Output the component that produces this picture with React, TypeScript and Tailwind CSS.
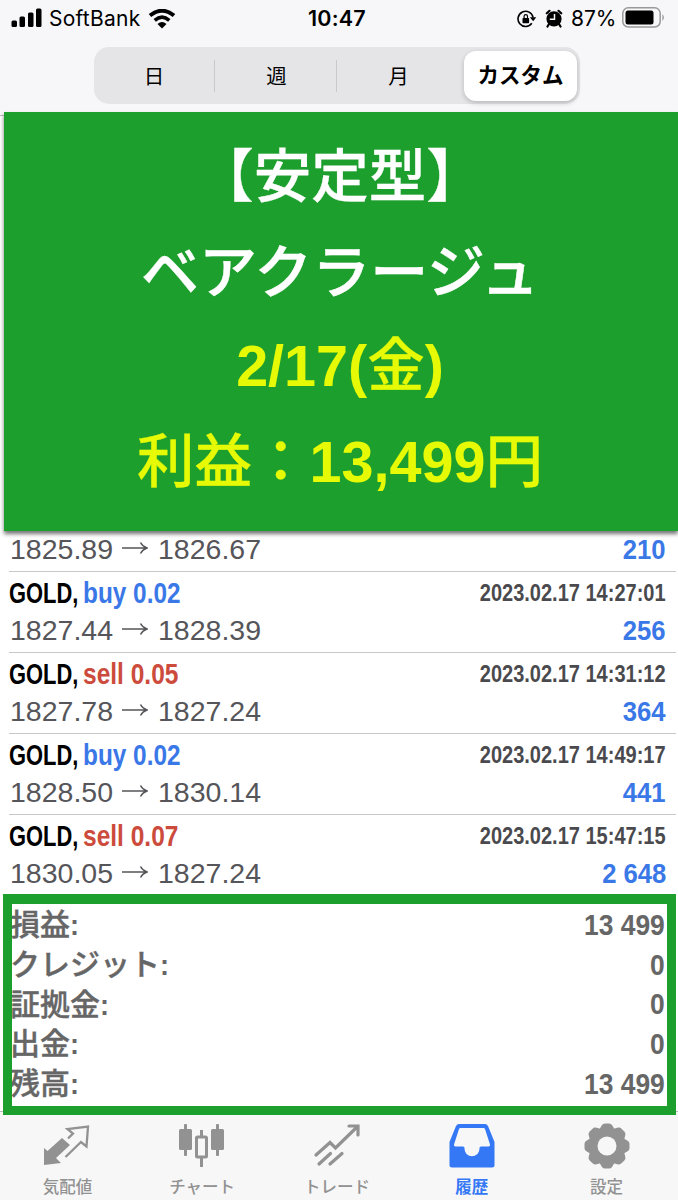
import React from "react";

const trades = [
  { side: "buy", lot: "0.02", time: "2023.02.17 14:27:01", from: "1827.44", to: "1828.39", profit: "256" },
  { side: "sell", lot: "0.05", time: "2023.02.17 14:31:12", from: "1827.78", to: "1827.24", profit: "364" },
  { side: "buy", lot: "0.02", time: "2023.02.17 14:49:17", from: "1828.50", to: "1830.14", profit: "441" },
  { side: "sell", lot: "0.07", time: "2023.02.17 15:47:15", from: "1830.05", to: "1827.24", profit: "2 648" },
];

const summary = [
  { label: "損益", value: "13 499" },
  { label: "クレジット", value: "0" },
  { label: "証拠金", value: "0" },
  { label: "出金", value: "0" },
  { label: "残高", value: "13 499" },
];

function StatusBar() {
  return (
    <div className="flex h-[37px] items-center pl-[11px] pr-[13px] text-black">
      <div className="flex flex-1 items-center">
        <svg className="-mt-[2px]" width="31" height="20" viewBox="0 0 31 20">
          <rect x="0.5" y="12.500" width="5.5" height="6.500" rx="1.5" />
          <rect x="8.5" y="8.500" width="5.500" height="10.500" rx="1.500" />
          <rect x="17" y="4.500" width="5.500" height="14.500" rx="1.500" />
          <rect x="25" y="0.500" width="5.500" height="18.500" rx="1.500" />
        </svg>
        <span className="ml-[7px] w-[92px] whitespace-nowrap font-[Inter] text-[21px] leading-[37px] tracking-[0.250px]">SoftBank</span>
        <svg className="ml-[7px]" width="28" height="20" viewBox="0 0 28 20">
          <path d="M2 6.500Q14 -3 26 6.500" fill="none" stroke="#000" strokeWidth="4" />
          <path d="M6.700 11.300Q14 5 21.300 11.300" fill="none" stroke="#000" strokeWidth="3.600" />
          <path d="M9.500 15Q14 11 18.500 15L14 19.500Z" />
        </svg>
      </div>
      <span className="-ml-[2px] font-[Inter] text-[21.500px] font-semibold leading-[37px] tracking-[0.200px]">10:47</span>
      <div className="flex flex-1 items-center justify-end">
        <svg width="20" height="18" viewBox="0 0 20 18" fill="none" stroke="#000">
          <path d="M14.800 13.300A7.600 7.600 0 1 1 16.100 7.500" strokeWidth="1.600" />
          <path d="M12.800 7.200H19.300L16.200 11.300Z" fill="#000" stroke="none" />
          <rect x="5.500" y="8" width="6.600" height="5.200" rx="0.700" fill="#000" stroke="none" />
          <path d="M7.100 8V6.300A1.700 1.700 0 0 1 10.500 6.300V8" strokeWidth="1.200" />
        </svg>
        <svg className="ml-[8px] -mt-[1px]" width="18" height="19" viewBox="0 0 18 19">
          <circle cx="9" cy="9.800" r="7.600" />
          <path d="M1.800 4.300L4.500 1.800M16.200 4.300L13.500 1.800M4 15L2.500 17.500M14 15L15.500 17.500" stroke="#000" strokeWidth="2.200" strokeLinecap="round" />
          <path d="M9.500 5V10.300H4.800" fill="none" stroke="#f7f6f8" strokeWidth="1.500" />
        </svg>
        <span className="ml-[8px] w-[45px] whitespace-nowrap font-[Inter] text-[21px] leading-[37px] tracking-[-0.100px]">87%</span>
        <svg className="ml-[6px] -mt-[2px]" width="43" height="21" viewBox="0 0 43 21">
          <rect x="0.800" y="0.800" width="37.400" height="19.200" rx="5.500" fill="none" stroke="#999" strokeWidth="1.500" />
          <rect x="3.500" y="3.500" width="28" height="14" rx="2.500" />
          <path d="M40.500 7V14Q43 10.500 40.500 7" fill="#888" />
        </svg>
      </div>
    </div>
  );
}

function Segments() {
  return (
    <div className="ml-[94px] mt-[10px] flex h-[57px] w-[486px] items-center rounded-[15px] bg-[#e5e5e8] text-[20.500px] text-black">
      <div className="w-[120px] pt-[3px] text-center">日</div>
      <div className="h-[32px] w-px bg-[#c9c9cd]" />
      <div className="w-[121px] pt-[3px] pl-[2px] text-center">週</div>
      <div className="h-[32px] w-px bg-[#c9c9cd]" />
      <div className="w-[121px] pt-[3px] pl-[2px] text-center">月</div>
      <div className="ml-[6px] flex h-[50px] w-[113px] items-center justify-center rounded-[12px] bg-white pt-[2px] text-[21.500px] font-bold shadow-[0_2px_5px_rgba(0,0,0,0.200)]">
        カスタム
      </div>
    </div>
  );
}

function Prices({ from, to, profit }: { from: string; to: string; profit: string }) {
  return (
    <div className="flex h-[37px] items-center justify-between pr-[10px] text-[28.500px] leading-[37px]">
      <div className="-mt-px flex items-center text-[#55555a]">
        <span className="w-[112px] pl-px">{from}</span>
        <svg className="-mt-[2px] ml-px" width="26" height="14" viewBox="0 0 26 14" fill="none" stroke="#55555a" strokeWidth="1.500">
          <path d="M0 7H25M18.500 1.500Q20.500 5.500 25 7Q20.500 8.500 18.500 12.500" />
        </svg>
        <span className="ml-[10px]">{to}</span>
      </div>
      <span className="origin-right scale-x-[0.900] text-[28.500px] font-bold text-[#3b78e7]">{profit}</span>
    </div>
  );
}

function MarketIcon() {
  return (
    <svg width="48" height="44" viewBox="0 0 48 44">
      <path d="M1 42V25L4.500 28L19 15L27 22L13 35L18 40Z" fill="#929292" />
      <path d="M22.500 34L38 19L43.500 23.500L45 3.500L24.500 6L30 10.500L25 15.500" fill="none" stroke="#929292" strokeWidth="2.300" />
    </svg>
  );
}

function ChartIcon() {
  return (
    <svg width="48" height="46" viewBox="0 0 48 46" fill="#929292">
      <rect x="1" y="6" width="13" height="21" rx="1.500" />
      <rect x="6" y="1" width="3" height="32" rx="1" />
      <rect x="33" y="6" width="13" height="21" rx="1.500" />
      <rect x="38" y="1" width="3" height="32" rx="1" />
      <rect x="18.500" y="14" width="10" height="20" rx="1" fill="none" stroke="#929292" strokeWidth="3" />
      <path d="M22 7H25V13H22ZM22 35H25V44H22Z" />
    </svg>
  );
}

function TradeIcon() {
  return (
    <svg width="48" height="46" viewBox="0 0 48 46" fill="none" stroke="#929292" strokeWidth="3.200" strokeLinecap="round" strokeLinejoin="miter">
      <path d="M3 32L17 19.500L22.500 25L44.500 3.500M36 3H45V12" />
      <path d="M6 41L17.500 30.500M17 41L29 30.500" />
    </svg>
  );
}

function HistoryIcon() {
  return (
    <svg width="46" height="46" viewBox="0 0 46 46">
      <path fill="#3478f6" fillRule="evenodd" d="M10 1H36Q38 1 39 3L45.500 19V42Q45.500 44.500 43 44.500H3Q0.500 44.500 0.500 42V19L7 3Q8 1 10 1ZM11.500 5Q10.500 5 10 6L5 21.500Q4.500 23.500 6.500 23.500H14Q15.500 23.500 15.500 25C15.500 36 30.500 36 30.500 25Q30.500 23.500 32 23.500H39.500Q41.500 23.500 41 21.500L36 6Q35.500 5 34.500 5Z" />
    </svg>
  );
}

function GearIcon() {
  return (
    <svg width="46" height="46" viewBox="0 0 46 46">
      <g fill="#929292">
        <circle cx="23" cy="23" r="18.500" />
        {[0, 45, 90, 135].map((angle) => (
          <path key={angle} transform={`rotate(${angle} 23 23)`} d="M15 7L18 2Q19 0.500 21 0.500H25Q27 0.500 28 2L31 7V39L28 44Q27 45.500 25 45.500H21Q19 45.500 18 44L15 39Z" />
        ))}
      </g>
      <circle cx="23" cy="23" r="9.500" fill="#f7f7f7" />
    </svg>
  );
}

const tabs = [
  { label: "気配値", icon: <MarketIcon />, active: false },
  { label: "チャート", icon: <ChartIcon />, active: false },
  { label: "トレード", icon: <TradeIcon />, active: false },
  { label: "履歴", icon: <HistoryIcon />, active: true },
  { label: "設定", icon: <GearIcon />, active: false },
];

export default function App() {
  return (
    <div className="flex h-[1200px] w-[678px] flex-col overflow-hidden bg-white font-['Liberation_Sans','Noto_Sans_CJK_JP',sans-serif]">
      <header className="h-[116px] shrink-0 border-b border-[#b8b8ba] bg-[#f7f6f8]">
        <StatusBar />
        <Segments />
      </header>
      <section className="relative z-10 -mt-[4px] ml-[4px] flex h-[419px] shrink-0 flex-col items-center bg-[#1d9f2d] pt-[14px] pr-[2px] text-[57px] font-bold leading-[97px] text-white shadow-[0_3px_4px_rgba(0,0,0,0.550)]">
        <div className="h-[97px] pt-[3px] text-[57.500px] font-medium [-webkit-text-stroke:0.300px_#fff]">【安定型】</div>
        <div className="h-[95px] pt-px text-[58px] font-medium [-webkit-text-stroke:0.500px_#fff]">ベアクラージュ</div>
        <div className="h-[96px] text-[57.500px] text-[#e6fa05]">
          2/17(<span className="font-medium [-webkit-text-stroke:0.300px_#e6fa05]">金</span>)
        </div>
        <div className="h-[97px] text-[57.500px] text-[#e6fa05]">
          <span className="font-medium [-webkit-text-stroke:0.300px_#e6fa05]">利益：</span>13,499<span className="font-medium [-webkit-text-stroke:0.300px_#e6fa05]">円</span>
        </div>
      </section>
      <main className="mr-[2px] h-[363px] shrink-0 pl-[9px]">
        <div className="h-[40px]">
          <Prices from="1825.89" to="1826.67" profit="210" />
        </div>
        {trades.map((t) => (
          <div key={t.time} className="h-[81px] border-t border-[#c8c8ca] pt-[3px]">
            <div className="flex h-[37px] items-center justify-between pr-[10px] font-bold leading-[37px]">
              <div className="flex text-[29px]">
                <span className="w-[74px] origin-left scale-x-[0.755] text-black">GOLD,</span>
                <span className={t.side === "buy" ? "origin-left scale-x-[0.840] text-[#3b78e7]" : "origin-left scale-x-[0.845] text-[#cc4b3c]"}>
                  {t.side} {t.lot}
                </span>
              </div>
              <span className="origin-right scale-x-[0.870] text-[23px] text-[#4a4a4e]">{t.time}</span>
            </div>
            <Prices from={t.from} to={t.to} profit={t.profit} />
          </div>
        ))}
      </main>
      <section className="relative z-10 ml-[3px] h-[221px] w-[673px] shrink-0 overflow-hidden border-[9px] border-t-[10px] border-[#1d9f2d] bg-white font-bold text-[#666]">
        {summary.map((row) => (
          <div key={row.label} className="flex h-[39.700px] items-center justify-between pr-[2px] leading-[39px]">
            <span className="-ml-[2px] pt-[2px] text-[30px]">
              <span className="font-medium [-webkit-text-stroke:0.400px_#666]">{row.label}</span>
              <span className="inline-block origin-left scale-x-[0.900]">:</span>
            </span>
            <span className="origin-right scale-x-[0.880] pt-px text-[30px]">{row.value}</span>
          </div>
        ))}
      </section>
      <nav className="-mt-[4px] flex h-[89px] shrink-0 border-t border-[#b8b8ba] bg-[#f7f7f7] pr-[4px] pt-[11px]">
        {tabs.map((tab) => (
          <div key={tab.label} className={tab.active ? "flex flex-1 flex-col items-center text-[#3478f6]" : "flex flex-1 flex-col items-center text-[#929292]"}>
            <div className="flex h-[46px] items-start">{tab.icon}</div>
            <span className={tab.active ? "mt-[8px] text-[16.500px] font-bold leading-[20px]" : "mt-[8px] text-[16.500px] font-medium leading-[20px]"}>{tab.label}</span>
          </div>
        ))}
      </nav>
    </div>
  );
}
